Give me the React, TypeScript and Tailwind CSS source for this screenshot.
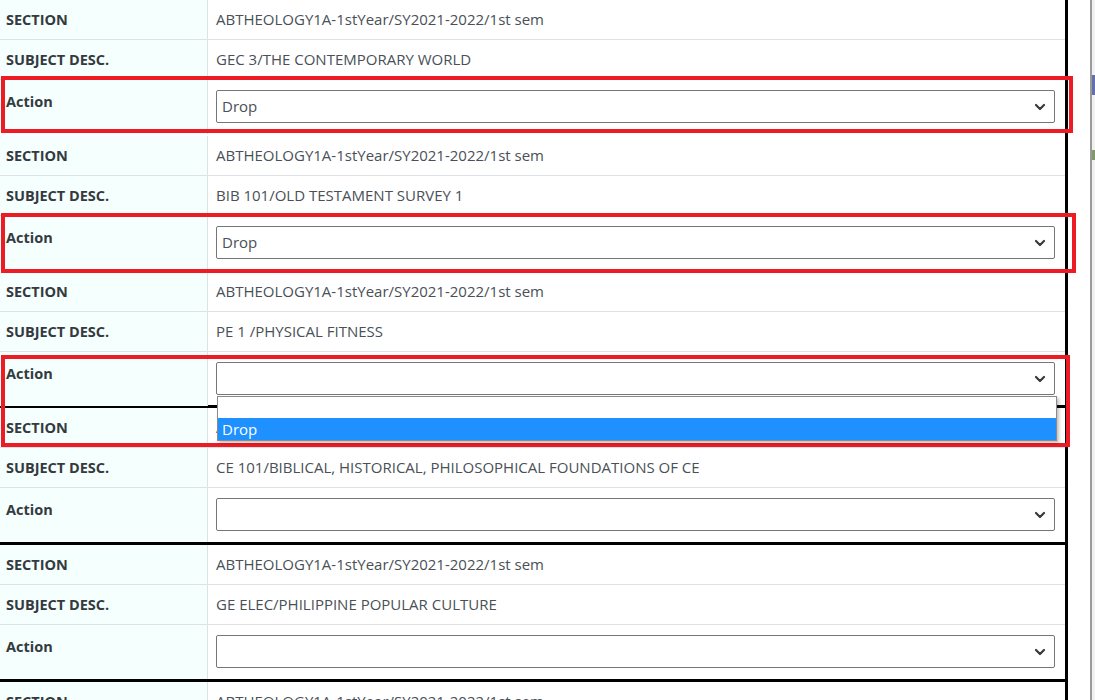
import React from "react";

type Group = {
  desc: string;
  value: string;
  open?: boolean;
  heavy?: boolean;
};

const SECTION = "ABTHEOLOGY1A-1stYear/SY2021-2022/1st sem";

const groups: Group[] = [
  { desc: "GEC 3/THE CONTEMPORARY WORLD", value: "Drop" },
  { desc: "BIB 101/OLD TESTAMENT SURVEY 1", value: "Drop" },
  { desc: "PE 1 /PHYSICAL FITNESS", value: "", open: true },
  { desc: "CE 101/BIBLICAL, HISTORICAL, PHILOSOPHICAL FOUNDATIONS OF CE", value: "", heavy: true },
  { desc: "GE ELEC/PHILIPPINE POPULAR CULTURE", value: "", heavy: true },
  { desc: "GE ELEC/PHILIPPINE POPULAR CULTURE", value: "", heavy: true },
];

function Chevron() {
  return (
    <svg width="12" height="8" viewBox="0 0 12 8" className="shrink-0">
      <path d="M2 2l4 4 4-4" fill="none" stroke="#343a40" strokeWidth="2.2" strokeLinecap="round" strokeLinejoin="round" />
    </svg>
  );
}

/* fake select, native one renders differently per platform */
function SelectBox({ value, open }: { value: string; open?: boolean }) {
  return (
    <div className="relative">
      <div className="flex h-[33px] items-center justify-between rounded-[2px] border border-[#767676] bg-white pl-[5px] pr-[8px] text-[15px] text-[#495057]">
        <span>{value}</span>
        <Chevron />
      </div>
      {open && (
        <div className="absolute left-[1px] top-[34px] z-10 w-[840px] border border-[#8a8a8a] bg-white shadow-[2px_2px_3px_rgba(0,0,0,0.25)]">
          <div className="h-[21px]" />
          <div className="flex h-[22px] items-center bg-[#1e90ff] pl-[4px] text-[15px] text-white">Drop</div>
        </div>
      )}
    </div>
  );
}

function Row({ label, children, action }: { label: string; children: React.ReactNode; action?: boolean }) {
  return (
    <div className={`flex ${action ? "h-[54px]" : "h-[40px] border-b border-[#dee2e6]"}`}>
      <div
        className={`flex w-[208px] shrink-0 border-r border-[#dee2e6] bg-[#f5fffd] pl-[6px] text-[14.5px] font-bold text-[#343a40] ${
          action ? "items-start pt-[11px]" : "items-center"
        }`}
      >
        {label}
      </div>
      <div className={`flex-1 pl-[8px] pr-[10px] text-[15px] text-[#495057] ${action ? "pt-[10px]" : "flex items-center"}`}>
        {children}
      </div>
    </div>
  );
}

function GroupBlock({ g, index }: { g: Group; index: number }) {
  let top = "";
  if (index > 0) {
    if (!g.heavy) top = "border-t-[2px] border-white";
    else if (index === 3) top = "-mt-px border-t-[3px] border-black";
    else top = "border-t-[3px] border-black";
  }
  return (
    <div className={top}>
      <Row label="SECTION">{SECTION}</Row>
      <Row label="SUBJECT DESC.">{g.desc}</Row>
      <Row label="Action" action>
        <SelectBox value={g.value} open={g.open} />
      </Row>
    </div>
  );
}

export default function App() {
  return (
    <div className="relative flex h-[700px] w-[1095px] overflow-hidden bg-white font-['Open_Sans',sans-serif]">
      <div className="w-[1065px] shrink-0">
        {groups.map((g, i) => (
          <GroupBlock key={i} g={g} index={i} />
        ))}
      </div>
      <div className="w-[3px] shrink-0 bg-black" />
      <div className="w-[22px] shrink-0 bg-white" />
      <div className="w-[2px] shrink-0 bg-[#9a9a9a]" />
      <div className="flex flex-1 flex-col bg-[#f1f1f1]">
        <div className="h-[75px]" />
        <div className="h-[20px] bg-[#6470a8]" />
        <div className="h-[55px]" />
        <div className="h-[10px] bg-[#7f9a6a]" />
      </div>

      {/* red annotation boxes */}
      <div className="pointer-events-none absolute left-[1px] top-[76px] h-[57px] w-[1072px] border-4 border-[#ed1c24]" />
      <div className="pointer-events-none absolute left-[1px] top-[213px] h-[60px] w-[1075px] border-4 border-[#ed1c24]" />
      <div className="pointer-events-none absolute left-[1px] top-[355px] h-[92px] w-[1069px] border-4 border-[#ed1c24]" />
    </div>
  );
}
